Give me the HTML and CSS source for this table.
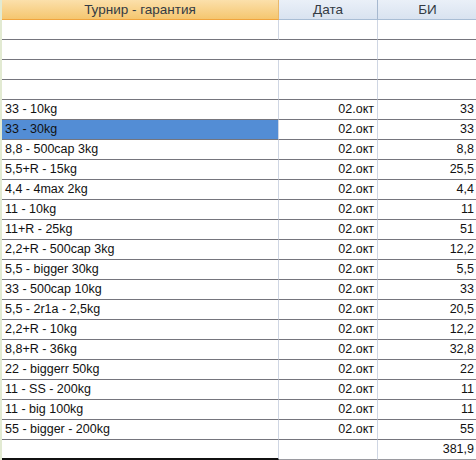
FILE: index.html
```html
<!DOCTYPE html>
<html>
<head>
<meta charset="utf-8">
<link rel="stylesheet" href="styles.css">
</head>
<body>
<div class="sheet">
  <div class="hd hd-a">Турнир - гарантия</div>
  <div class="hd hd-b">Дата</div>
  <div class="hd hd-c">БИ</div>

  <div class="c a"></div><div class="c b"></div><div class="c n"></div>
  <div class="c a merged"></div><div class="c n"></div>
  <div class="c a"></div><div class="c b"></div><div class="c n"></div>
  <div class="c a"></div><div class="c b"></div><div class="c n"></div>

  <div class="c a">33 - 10kg</div><div class="c b">02.окт</div><div class="c n">33</div>
  <div class="c a sel">33 - 30kg</div><div class="c b">02.окт</div><div class="c n">33</div>
  <div class="c a">8,8 - 500cap 3kg</div><div class="c b">02.окт</div><div class="c n">8,8</div>
  <div class="c a">5,5+R - 15kg</div><div class="c b">02.окт</div><div class="c n">25,5</div>
  <div class="c a">4,4 - 4max 2kg</div><div class="c b">02.окт</div><div class="c n">4,4</div>
  <div class="c a">11 - 10kg</div><div class="c b">02.окт</div><div class="c n">11</div>
  <div class="c a">11+R - 25kg</div><div class="c b">02.окт</div><div class="c n">51</div>
  <div class="c a">2,2+R - 500cap 3kg</div><div class="c b">02.окт</div><div class="c n">12,2</div>
  <div class="c a">5,5 - bigger 30kg</div><div class="c b">02.окт</div><div class="c n">5,5</div>
  <div class="c a">33 - 500cap 10kg</div><div class="c b">02.окт</div><div class="c n">33</div>
  <div class="c a">5,5 - 2r1a - 2,5kg</div><div class="c b">02.окт</div><div class="c n">20,5</div>
  <div class="c a">2,2+R - 10kg</div><div class="c b">02.окт</div><div class="c n">12,2</div>
  <div class="c a">8,8+R - 36kg</div><div class="c b">02.окт</div><div class="c n">32,8</div>
  <div class="c a">22 - biggerr 50kg</div><div class="c b">02.окт</div><div class="c n">22</div>
  <div class="c a">11 - SS - 200kg</div><div class="c b">02.окт</div><div class="c n">11</div>
  <div class="c a">11 - big 100kg</div><div class="c b">02.окт</div><div class="c n">11</div>
  <div class="c a">55 - bigger - 200kg</div><div class="c b">02.окт</div><div class="c n">55</div>

  <div class="c a last"></div><div class="c b last"></div><div class="c n last">381,9</div>
</div>
</body>
</html>
```

FILE: styles.css
```css
* { box-sizing: border-box; }
html, body { margin: 0; padding: 0; background: #ffffff; }
body { width: 476px; height: 460px; overflow: hidden; }

.sheet {
  display: grid;
  grid-template-columns: 277px 99px 100px;
  grid-auto-rows: 20px;
  border-left: 2px solid #e2ead2;
  width: 478px;
  font-family: "Liberation Sans", Arial, sans-serif;
  font-size: 12.5px;
  color: #111111;
}

.hd {
  display: flex;
  align-items: center;
  justify-content: center;
  font-size: 13.5px;
  color: #333b44;
  padding-bottom: 1px;
}
.hd-a {
  background: linear-gradient(#fbe0ab, #f5c66f);
  border-bottom: 1px solid #f0a43e;
  border-right: 1px solid #e9b86a;
}
.hd-b, .hd-c {
  background: linear-gradient(#eaf0f8, #d9e3f0);
  border-bottom: 1px solid #a9bdd4;
  border-right: 1px solid #a6b8cf;
}

.c {
  display: flex;
  align-items: flex-end;
  padding: 0 3px 3px 3px;
  border-bottom: 1px solid #75757d;
  border-right: 1px solid #cfd6e3;
  white-space: nowrap;
  line-height: 14px;
}
.a { justify-content: flex-start; }
.b, .n { justify-content: flex-end; }
.merged { grid-column: span 2; }
.sel { background: #538dd5; }
.last { border-bottom: 1px solid #9a9aa0; }
.a.last { border-bottom: 2px solid #111111; }
```
